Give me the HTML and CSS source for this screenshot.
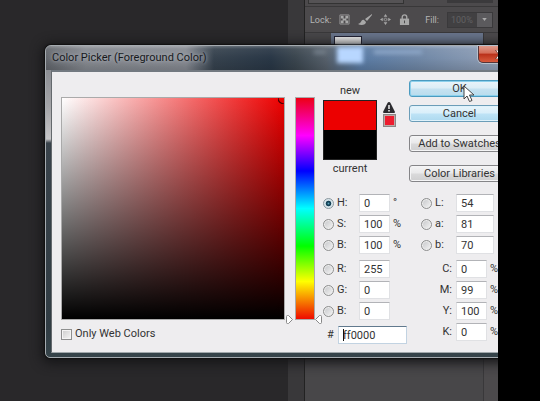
FILE: index.html
```html
<!DOCTYPE html>
<html lang="en">
<head>
<meta charset="utf-8">
<title>Color Picker</title>
<link rel="stylesheet" href="styles.css">
</head>
<body>
<main class="desktop">
  <div class="canvas"></div>
  <div class="gutter"></div>
  <aside class="panel">
    <div class="mode-row"><span class="mode-box"></span><span class="opacity-box"></span></div>
    <div class="lock-row">
      <span>Lock:</span>
      <svg class="tool" viewBox="0 0 12 12"><path d="M1 1h10v10H1z" fill="none" stroke="#969596"/><path d="M2 2h3v3H2zM7 2h3v3H7zM4 5h4v2H4zM2 7h3v3H2zM7 7h3v3H7z" fill="#a8a8a8"/></svg>
      <svg class="tool brush" viewBox="0 0 14 12"><path d="M14 0 7 5l2 2 5-6zM6 6C3 5 4 9 0 10c3 2 8 1 8-2z" fill="#a8a8a8"/></svg>
      <svg class="tool" viewBox="0 0 12 12"><path d="m6 0 2 3H4zM6 12l2-3H4zM0 6l3-2v4zM12 6 9 4v4zM5 4h2v1H5zM5 7h2v1H5zM4 5h1v2H4zM7 5h1v2H7z" fill="#a6a6a6"/></svg>
      <svg class="tool" viewBox="0 0 12 12"><path d="M3.500 6V3.500a2.500 2.500 0 0 1 5 0V6" fill="none" stroke="#a8a8a8" stroke-width="1.500"/><path d="M1 5h10v7H1z" fill="#a8a8a8"/><path d="M5.500 7h1v3h-1z" fill="#444"/></svg>
      <label class="fill-label" for="fill">Fill:</label>
      <span class="fill"><input id="fill" value="100%" disabled><button aria-label="Fill options"><svg viewBox="0 0 6 4"><path d="M0 0h6L3 4z" fill="#aaa"/></svg></button></span>
    </div>
    <div class="layers"><div class="layer"><span class="thumb"></span></div><div class="layer-list"></div></div>
  </aside>

  <section class="dialog" aria-labelledby="dialog-title">
    <header class="titlebar">
      <h1 id="dialog-title">Color Picker (Foreground Color)</h1>
      <span class="glass-eye"></span><span class="glass-thumb"></span><span class="glass-name"></span>
      <button class="close" aria-label="Close"><svg viewBox="0 0 12 8"><path d="M1 0h3l2 2 2-2h3L8 4l3 4H8L6 6 4 8H1l3-4z" fill="#fff" stroke="#6b3028" stroke-width=".7"/></svg></button>
    </header>
    <form class="client">
      <div class="picker">
        <div class="field"><svg class="marker" viewBox="0 0 6 6"><path d="M0 0q0 5 6 6" fill="none" stroke="#400" stroke-width="1.200"/></svg></div>
        <label class="web"><input type="checkbox">Only Web Colors</label>
      </div>
      <div class="hue-track">
        <div class="hue"></div>
        <svg class="pointer" viewBox="0 0 7 9"><path d="M.5 1.500q0-1 1-1h1L6.500 4.500l-4 4h-1q-1 0-1-1z" fill="#fff" stroke="#888"/></svg>
        <svg class="pointer pointer-right" viewBox="0 0 7 9"><path d="M6.500 1.500q0-1-1-1h-1L.5 4.500l4 4h1q1 0 1-1z" fill="#fff" stroke="#888"/></svg>
      </div>
      <div class="controls">
        <div class="top">
          <div class="compare"><span>new</span><div class="swatch"><i></i></div><span>current</span></div>
          <div class="gamut">
            <svg viewBox="0 0 12 11"><path d="M6 0q1 0 1.500 1L12 10q0 1-1 1H1q-1 0-1-1L4.500 1Q5 0 6 0z" fill="#2c2c30"/><path d="M5.300 3h1.400v4H5.300zM5.300 8h1.400v1.500H5.300z" fill="#fff"/></svg>
            <button type="button" aria-label="Use nearest printable color"></button>
          </div>
          <div class="actions">
            <button type="button" class="btn default">OK</button>
            <button type="button" class="btn hot">Cancel</button>
            <button type="button" class="btn gap">Add to Swatches</button>
            <button type="button" class="btn gap">Color Libraries</button>
          </div>
        </div>
        <div class="values">
          <div class="group">
            <div class="row"><label><input type="radio" name="c" checked>H:</label><input type="text" aria-label="Hue" value="0"><span>°</span></div>
            <div class="row"><label><input type="radio" name="c">S:</label><input type="text" aria-label="Saturation" value="100"><span>%</span></div>
            <div class="row"><label><input type="radio" name="c">B:</label><input type="text" aria-label="Brightness" value="100"><span>%</span></div>
            <div class="row split"><label><input type="radio" name="c">R:</label><input type="text" aria-label="Red" value="255"></div>
            <div class="row"><label><input type="radio" name="c">G:</label><input type="text" aria-label="Green" value="0"></div>
            <div class="row"><label><input type="radio" name="c">B:</label><input type="text" aria-label="Blue" value="0"></div>
            <div class="hex"><label for="hex">#</label><span class="hexbox"><input id="hex" type="text" value="ff0000"><i class="caret"></i></span></div>
          </div>
          <div class="group second">
            <div class="row lab"><label><input type="radio" name="c">L:</label><input type="text" aria-label="Lightness" value="54"></div>
            <div class="row lab"><label><input type="radio" name="c">a:</label><input type="text" aria-label="a" value="81"></div>
            <div class="row lab"><label><input type="radio" name="c">b:</label><input type="text" aria-label="b" value="70"></div>
            <div class="row split cmyk"><label for="cy">C:</label><input id="cy" type="text" value="0"><span>%</span></div>
            <div class="row cmyk"><label for="ma">M:</label><input id="ma" type="text" value="99"><span>%</span></div>
            <div class="row cmyk"><label for="ye">Y:</label><input id="ye" type="text" value="100"><span>%</span></div>
            <div class="row cmyk"><label for="bk">K:</label><input id="bk" type="text" value="0"><span>%</span></div>
          </div>
        </div>
      </div>
    </form>
  </section>
  <svg class="cursor" viewBox="0 0 12 18"><path d="M1 1v13l3-3 2.500 5.500 2.500-1L6.500 10H11z" fill="#fff" stroke="#444"/></svg>
</main>
</body>
</html>
```
FILE: styles.css
```css
* { box-sizing: border-box; }
body {
  margin: 0;
  background: #000;
  color: #333;
  font: 11px/14px Roboto, "Liberation Sans", sans-serif;
}
button, input { font: inherit; color: inherit; margin: 0; }
svg { display: block; }

.desktop {
  position: relative;
  display: grid;
  grid-template-columns: 1fr 16px 194px;
  min-height: 100vh;
  margin-right: 42px;
  overflow: hidden;
  background: #29282a;
}
.gutter { background: #39383a; }

/* Layers panel behind the dialog */
.panel {
  display: flex;
  flex-direction: column;
  border-left: 1px solid #222;
  background: #4c4a4c;
  color: #b4b4b4;
  font-size: 9px;
}
.mode-row {
  display: flex;
  justify-content: space-between;
  height: 7px;
  padding: 0 5px 0 3px;
  border-bottom: 1px solid #393839;
}
.mode-box { width: 96px; height: 4px; border: 1px solid #333; border-top: 0; background: #555355; }
.opacity-box { width: 46px; height: 3px; background: #3b3a3c; }
.lock-row {
  display: flex;
  align-items: center;
  gap: 8px;
  height: 26px;
  padding: 0 5px;
  border-bottom: 1px solid #39383a;
}
.tool { width: 11px; height: 11px; }
.brush { width: 14px; height: 12px; }
.fill-label { margin-left: auto; }
.fill { display: flex; height: 16px; border: 1px solid #3a393b; }
.fill input { width: 29px; padding: 0 3px; border: 0; background: #414042; color: #626163; }
.fill button { display: grid; place-items: center; width: 15px; padding: 0; border: 0; background: #5b5a5d; }
.fill svg { width: 5px; height: 3px; }
.layers {
  display: flex;
  flex: 1;
  flex-direction: column;
  margin-right: 14px;
  border-right: 1px solid #39383a;
  background: #484749;
}
.layer { height: 34px; margin-left: 26px; padding: 3px; background: #69758b; }
.thumb { display: block; width: 28px; height: 27px; border: 1px solid #223; background: #eee; }

/* Dialog window; it runs past the right edge of the desktop */
.dialog {
  position: absolute;
  top: 45px;
  left: 45px;
  right: -26px;
  padding: 0 5px 4px;
  border: 1px solid #a5abb0;
  border-radius: 6px 6px 5px 5px;
  background: linear-gradient(#7b7f86, #a3a4a7 60px, #c6c6c8 93px, #39434b 97px, #303c43 280px, #36444a);
  box-shadow: 0 0 1px 1px #111, 0 2px 12px 3px #151517;
}
.titlebar {
  position: relative;
  display: flex;
  align-items: center;
  height: 24px;
  margin: 0 -5px;
  padding: 0 6px;
  border-radius: 5px 0 0;
  background:
    linear-gradient(#ffffff40, #ffffff10 3px, #fff0 50%, #0002),
    linear-gradient(90deg, #62666c, #858990 40px, #868a92 140px, #36424e 168px, #293746 225px, #3b464f 250px, #56606b 280px, #5b7ca5 315px, #6f87a6 370px, #91a0b7 450px);
}
h1 { margin: 0; color: #17191d; font-size: 11px; font-weight: 400; text-shadow: 0 0 6px #b4b8be, 0 0 3px #a0a4ab; white-space: nowrap; }
.glass-thumb, .glass-name, .glass-eye { position: absolute; filter: blur(2px); }
.glass-thumb { top: 1px; left: 291px; width: 26px; height: 16px; background: #b8d7ff; }
.glass-name { top: 4px; left: 328px; width: 48px; height: 4px; background: #8fa8c9; }
.glass-eye { top: 4px; left: 268px; width: 12px; height: 4px; background: #75808b; }
.close {
  position: absolute;
  top: 0;
  right: 0;
  display: grid;
  place-items: center;
  width: 45px;
  height: 17px;
  padding: 0;
  border: 1px solid #563539;
  border-top: 0;
  border-radius: 0 0 5px 5px;
  background: linear-gradient(#df9b8c, #d46d58 45%, #b93019 50%, #d85b3d);
  box-shadow: 0 0 0 1px #b6c0cb;
}
.close svg { width: 14px; height: 9px; }

.client {
  display: flex;
  padding: 8px 7px 8px 9px;
  border: 1px solid #64696d;
  border-top: 2px solid #727980;
  border-bottom-color: #a1a8ab;
  background: #eeedef;
}
.picker { flex: 1; min-width: 0; padding-top: 17px; }
.field {
  position: relative;
  height: 223px;
  border: 1px solid #aaa;
  background:
    linear-gradient(#0000, #000),
    linear-gradient(90deg, #fff, #ee0000);
}
.marker { position: absolute; top: 0; right: 0; width: 6px; height: 6px; }
.web { display: flex; align-items: center; gap: 3px; width: max-content; margin-top: 7px; }
input[type="checkbox"] {
  appearance: none;
  width: 11px;
  height: 11px;
  border: 1px solid #8e8f8f;
  background: linear-gradient(135deg, #ccc, #f6f6f6);
  box-shadow: inset 0 0 0 1px #f4f4f4;
}
.hue-track { position: relative; width: 38px; padding: 17px 8px 0 10px; }
.hue {
  height: 223px;
  border: 1px solid #aaa;
  background: linear-gradient(#ec0014, #f0f 17%, #00f 33%, #0ff 50%, #0f0 67%, #ff0 83%, #ee0a00);
}
.pointer { position: absolute; top: 235px; left: 1px; width: 7px; height: 9px; }
.pointer-right { left: 30px; }

.controls { width: 187px; }
.top { display: flex; height: 114px; }
.compare { display: flex; flex-direction: column; align-items: center; width: 54px; padding-top: 4px; }
.swatch { width: 54px; height: 60px; margin: 2px 0; border: 1px solid #222; background: #000; }
.swatch i { display: block; height: 29px; background: #ec0000; }
.gamut { display: flex; flex-direction: column; align-items: center; gap: 1px; width: 24px; padding-top: 22px; }
.gamut svg { width: 12px; height: 11px; }
.gamut button { width: 13px; height: 13px; padding: 0; border: 1px solid #8b8585; background: #ed1c2e; box-shadow: inset 0 0 0 1px #bba9a6; }
.actions { display: flex; flex: 1; flex-direction: column; margin-left: 8px; }
.btn {
  height: 17px;
  margin-bottom: 8px;
  padding: 0;
  border: 1px solid #858588;
  border-radius: 3px;
  background: linear-gradient(#f4f4f5, #e9e9ea 48%, #dadadb 52%, #cfcfd0);
  box-shadow: inset 0 0 0 1px #f5f5f6;
  line-height: 15px;
  white-space: nowrap;
}
.gap { margin-top: 5px; }
.default { border-color: #4b9bc0; background: linear-gradient(#e9f4fa, #dcedf6 48%, #c5e2f1 52%, #b9dced); box-shadow: inset 0 0 0 1px #8cd0ec; }
.hot { border-color: #6b9db8; background: linear-gradient(#e7f4fb, #d9effa 48%, #bee3f6 52%, #add9ef); box-shadow: inset 0 0 0 1px #dff2fb; }

.values { display: flex; }
.group { width: 98px; }
.second { width: 89px; }
.row { display: grid; grid-template-columns: 36px 31px 1fr; align-items: center; height: 18px; margin-bottom: 3px; }
.split { margin-top: 6px; }
.row label { display: flex; align-items: center; gap: 3px; }
.row span { padding-left: 3px; }
.row.lab { grid-template-columns: 35px 38px; }
.row.cmyk { grid-template-columns: 35px 31px 1fr; }
.row.cmyk label { justify-content: flex-end; padding-right: 4px; }
input[type="text"] {
  width: 100%;
  min-width: 0;
  height: 18px;
  padding: 0 0 0 4px;
  border: 1px solid #e0e1e4;
  border-top-color: #b2b3b7;
  background: #fff;
}
input[type="radio"] {
  appearance: none;
  width: 11px;
  height: 11px;
  border: 1px solid #8e8f8f;
  border-radius: 50%;
  background: linear-gradient(135deg, #c4c5c8, #f5f5f5);
  box-shadow: inset 0 0 0 1px #eee;
}
input[type="radio"]:checked { border-color: #8a979e; background: radial-gradient(circle at 50% 50%, #5ea4bd, #124156 25%, #154156 38%, #d6e4ea 50%); box-shadow: none; }
.hex { display: flex; align-items: center; gap: 5px; margin-top: 6px; padding-left: 4px; }
.hex label { width: 6px; }
.hexbox { position: relative; flex: none; width: 69px; }
.hexbox input[type="text"] { border-color: #c2d3e2; border-top-color: #61798d; }
.caret { position: absolute; top: 3px; left: 5px; width: 1px; height: 12px; background: #111; }

.cursor { position: absolute; top: 85px; left: 463px; width: 12px; height: 18px; }
```
